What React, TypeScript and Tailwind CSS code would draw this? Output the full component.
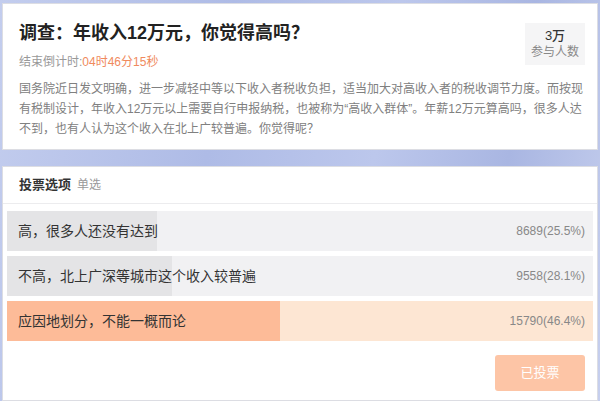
import React from "react";

type VoteOption = {
  id: string;
  label: string;
  count: number;
  percent: number;
  fillPx: number;
  chosen?: boolean;
};

const options: VoteOption[] = [
  { id: "a", label: "高，很多人还没有达到", count: 8689, percent: 25.5, fillPx: 150 },
  { id: "b", label: "不高，北上广深等城市这个收入较普遍", count: 9558, percent: 28.1, fillPx: 165 },
  { id: "c", label: "应因地划分，不能一概而论", count: 15790, percent: 46.4, fillPx: 273, chosen: true },
];

const font = { fontFamily: '"Liberation Sans", "Noto Sans CJK SC", sans-serif' };

function OptionRow({ opt }: { opt: VoteOption }) {
  return (
    <div
      className={`relative flex h-[40px] items-center justify-between overflow-hidden pl-[11px] pr-[8px] ${
        opt.chosen ? "bg-[#fde6d3]" : "bg-[#f1f1f3]"
      }`}
    >
      <div
        className={`absolute inset-y-0 left-0 ${opt.chosen ? "bg-[#fdbb98]" : "bg-[#e4e4e6]"}`}
        style={{ width: opt.fillPx }}
      />
      <span className="relative text-[14px] text-[#333]">{opt.label}</span>
      <span className="relative text-[12px] text-[#888]">
        {opt.count}({opt.percent}%)
      </span>
    </div>
  );
}

export default function App() {
  return (
    <div
      className="min-h-[401px] w-[600px] bg-[linear-gradient(100deg,#c3cdee_0%,#aebbe6_35%,#bcc7ec_60%,#a9b6e2_80%,#c6cfee_100%)] px-[2px] pt-[3px]"
      style={font}
    >
      {/* survey header */}
      <div className="border border-[#dcdde3] bg-white pb-[10px] pl-[16px] pr-[12px] pt-[17px]">
        <div className="flex items-start justify-between">
          <div>
            <h1 className="text-[18px] font-bold leading-[24px] text-[#222]">
              调查：年收入12万元，你觉得高吗？
            </h1>
            <div className="mt-[8px] text-[12px] leading-[18px] text-[#999]">
              结束倒计时:<span className="text-[#f08a5d]">04时46分15秒</span>
            </div>
          </div>
          <div className="mt-[2px] flex h-[42px] w-[60px] flex-col items-center justify-center bg-[#f5f5f6]">
            <div className="text-[13px] font-medium leading-[16px] text-[#333]">3万</div>
            <div className="text-[12px] leading-[16px] text-[#888]">参与人数</div>
          </div>
        </div>
        <p className="mt-[8px] w-[568px] text-[12px] leading-[20px] text-[#808080]">
          国务院近日发文明确，进一步减轻中等以下收入者税收负担，适当加大对高收入者的税收调节力度。而按现有税制设计，年收入12万元以上需要自行申报纳税，也被称为“高收入群体”。年薪12万元算高吗，很多人达不到，也有人认为这个收入在北上广较普遍。你觉得呢？
        </p>
      </div>

      {/* vote options */}
      <div className="mt-[16px] border border-[#dcdde3] bg-white pb-[9px]">
        <div className="flex h-[37px] items-center gap-[6px] border-b border-[#ececee] pl-[16px]">
          <span className="text-[13px] font-bold text-[#333]">投票选项</span>
          <span className="text-[12px] text-[#999]">单选</span>
        </div>
        <div className="flex flex-col gap-[5px] px-[4px] pt-[7px]">
          {options.map((o) => (
            <OptionRow key={o.id} opt={o} />
          ))}
        </div>
        <div className="mt-[14px] flex justify-end pr-[12px]">
          <button
            type="button"
            className="h-[36px] w-[90px] rounded-[3px] bg-[#fdc5a6] text-[13px] text-white"
          >
            已投票
          </button>
        </div>
      </div>
    </div>
  );
}
